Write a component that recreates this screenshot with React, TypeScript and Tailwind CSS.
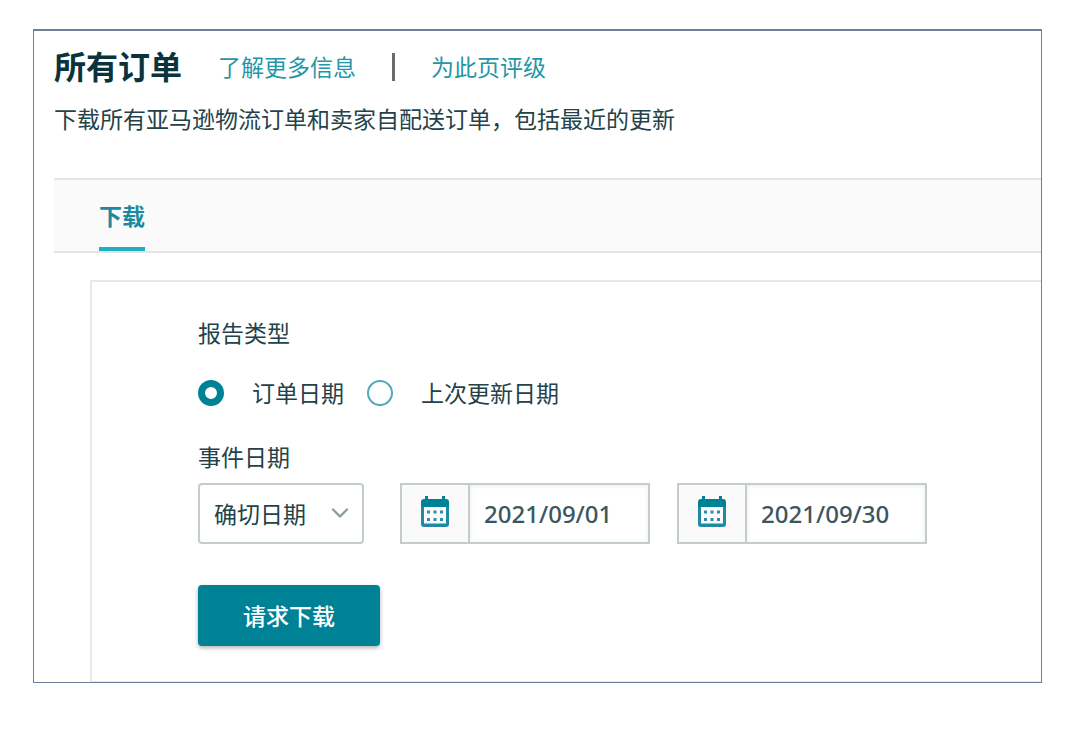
import { useState } from 'react';
import { ChevronDown } from 'lucide-react';

const REPORT_TYPES = [
  { value: 'order', label: '订单日期' },
  { value: 'updated', label: '上次更新日期' },
];

const CalendarIcon = () => (
  <svg width="28" height="31" viewBox="0 0 28 31" aria-hidden="true">
    <path
      fill="#2089a6"
      fillRule="evenodd"
      d="M0 10h28v18a3 3 0 0 1-3 3H3a3 3 0 0 1-3-3zM3 11v16.500h22V11z"
    />
    <path
      fill="#008296"
      d="M4 0h3v3h14V0h3v3h1a3 3 0 0 1 3 3v5H0V6a3 3 0 0 1 3-3h1z"
    />
    <path
      fill="#2a8db0"
      d="M6 14.500h3v3H6zm6.500 0h3v3h-3zm6.500 0h3v3h-3zM6 22h3v3H6zm6.500 0h3v3h-3zm6.500 0h3v3h-3z"
    />
  </svg>
);

type DateFieldProps = {
  id: string;
  label: string;
  value: string;
  onChange: (value: string) => void;
};

const DateField = ({ id, label, value, onChange }: DateFieldProps) => (
  <div className="flex h-[61px] w-[250px] border-2 border-[#c3cdcd]">
    <label
      htmlFor={id}
      aria-label={label}
      className="flex w-[68px] shrink-0 items-center justify-center border-r-2 border-[#c3cdcd] bg-[#fafafa] pb-1"
    >
      <CalendarIcon />
    </label>
    <input
      id={id}
      type="text"
      value={value}
      onChange={(e) => onChange(e.target.value)}
      className="w-full min-w-0 bg-white px-3.5 font-['Noto_Sans',sans-serif] text-2xl font-medium text-[#3c5660] shadow-[inset_0_1px_4px_rgba(0,0,0,0.08)] focus:outline-none"
    />
  </div>
);

const App = () => {
  const [reportType, setReportType] = useState('order');
  const [range, setRange] = useState('exact');
  const [startDate, setStartDate] = useState('2021/09/01');
  const [endDate, setEndDate] = useState('2021/09/30');

  return (
    <main className="mt-[29px] mr-[38px] mb-12 ml-[33px] overflow-hidden border border-t-2 border-[#6f7f98] bg-white pl-5 font-['Open_Sans','Noto_Sans_CJK_SC',sans-serif] text-[23px] leading-8 text-[#23424a]">
      {/* Page heading */}
      <header className="pt-4">
        <div className="flex items-center">
          <h1 className="text-[32px] leading-10 font-bold text-[#0b333c]">
            所有订单
          </h1>
          <a href="#more" className="ml-9 text-[#2596a8]">
            了解更多信息
          </a>
          <span className="ml-9 h-7 w-[3px] bg-[#6a6a6a]" />
          <a href="#rate" className="ml-9 text-[#2596a8]">
            为此页评级
          </a>
        </div>
        <p className="mt-4">
          下载所有亚马逊物流订单和卖家自配送订单，包括最近的更新
        </p>
      </header>

      {/* Tabs */}
      <nav className="mt-[43px] flex h-[75px] border-y-2 border-[#e4e6e6] bg-[#fafafa] pl-[45px]">
        <button
          type="button"
          className="border-b-4 border-[#1fafc0] pt-1 font-bold text-[#1c8ba1]"
        >
          下载
        </button>
      </nav>

      {/* Report form */}
      <form
        onSubmit={(e) => e.preventDefault()}
        className="mt-[27px] ml-9 border-t-2 border-b border-l-2 border-[#e4e8e8] pt-[35px] pb-[35px] pl-[106px]"
      >
        <fieldset>
          <legend>报告类型</legend>
          <div className="mt-7 flex gap-[23px]">
            {REPORT_TYPES.map((type) => (
              <label key={type.value} className="flex items-center gap-7">
                <input
                  type="radio"
                  name="reportType"
                  value={type.value}
                  checked={reportType === type.value}
                  onChange={() => setReportType(type.value)}
                  className="size-[26px] appearance-none rounded-full border-2 border-[#4fa9b7] bg-white checked:border-[7px] checked:border-[#008296]"
                />
                {type.label}
              </label>
            ))}
          </div>
        </fieldset>

        <label htmlFor="range" className="mt-8 block">
          事件日期
        </label>
        <div className="mt-2.5 flex gap-[27px]">
          <div className="relative mr-[9px] w-[166px]">
            <select
              id="range"
              value={range}
              onChange={(e) => setRange(e.target.value)}
              className="h-[61px] w-full appearance-none rounded-sm border-2 border-[#c3cdcd] bg-white px-3.5 focus:outline-none"
            >
              <option value="exact">确切日期</option>
            </select>
            <ChevronDown
              size={28}
              strokeWidth={2}
              className="pointer-events-none absolute top-4 right-2.5 text-[#8b9a9c]"
            />
          </div>
          <DateField
            id="start"
            label="开始日期"
            value={startDate}
            onChange={setStartDate}
          />
          <DateField
            id="end"
            label="结束日期"
            value={endDate}
            onChange={setEndDate}
          />
        </div>

        <button
          type="submit"
          className="mt-[41px] h-[61px] w-[182px] rounded-sm bg-[#008296] font-medium text-white shadow-[0_2px_4px_rgba(0,0,0,0.3)]"
        >
          请求下载
        </button>
      </form>
    </main>
  );
};

export default App;
